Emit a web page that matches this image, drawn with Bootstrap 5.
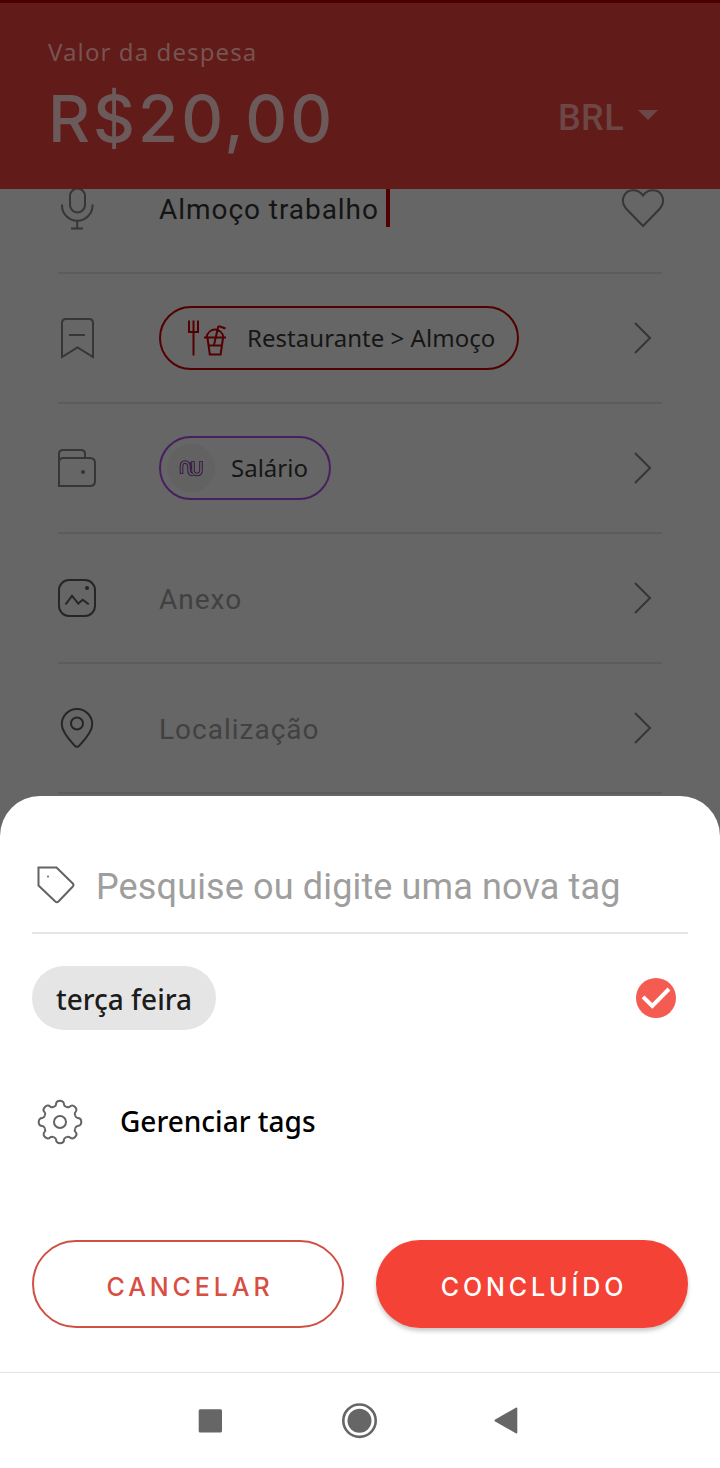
<!DOCTYPE html>
<html lang="pt-BR">
<head>
<meta charset="utf-8">
<meta name="viewport" content="width=device-width, initial-scale=1">
<title>Nova despesa</title>
<link href="https://cdn.jsdelivr.net/npm/bootstrap@5.3.0/dist/css/bootstrap.min.css" rel="stylesheet">
<style>
body{width:720px;height:1468px;overflow:hidden;background:#fff;font-family:"Noto Sans",sans-serif;line-height:1}
svg{display:block;fill:none;stroke:currentColor;stroke-width:2;flex:none}
.robo{font-family:Roboto,sans-serif}
.dot{fill:currentColor;stroke:none}
.amount-bar{height:189px;background:#611b18;border-top:3px solid #4d0002;padding:36px 62px 0 48px}
.caption-text{font-size:24px;letter-spacing:1.1px;line-height:26px;color:#775352}
.amount{font-family:Inter,"Noto Sans",sans-serif;font-size:65px;font-weight:500;letter-spacing:3px;line-height:80px;margin-top:14px;color:#6c5a5a}
.currency{font-size:36px;font-weight:500;letter-spacing:.4px;color:#6c4745;margin-top:7px}
.currency svg{margin-bottom:6px;margin-left:14px}
.backdrop-list{height:647px;background:#666;padding:0 58px;overflow:hidden;color:#363636}
.entry{height:130px;border-bottom:2px solid #5c5c5c}
.entry:first-child{margin-top:-45px}
.entry-icon{width:38px;margin-right:63px}
.entry-icon.strong{color:#262626}
.entry-text{font-size:28px;letter-spacing:1px;color:#414141;padding-top:3px}
.entry-text.typed{color:#141414;letter-spacing:.95px}
.pill{height:64px;border:2px solid #540000;border-radius:32px;font-size:24px;padding:0 22px;color:#161616}
.pill-category{letter-spacing:.04px}
.pill-account{border-color:#48205f;padding:0 21px 0 6px}
.food{color:#540000;margin-right:18px}
.bank{width:48px;height:48px;border-radius:50%;background:#626262;color:#371a45;margin-right:16px}
.caret-line{width:4px;height:38px;background:#540000;margin-left:7px}
.chev{margin-right:10px}
.heart{margin-right:-3px}
.sheet{height:576px;margin-top:-40px;border-radius:40px 40px 0 0;background:#fff;padding:56px 32px 0}
.search{height:82px;border-bottom:2px solid #e5e5e5;color:#636363;padding:0 0 15px 5px}
.search-text{font-size:36px;letter-spacing:.14px;color:#9e9e9e;margin-left:21px;padding-top:4px}
.tag-row{margin-top:32px;padding-right:12px}
.tag-pill{height:64px;border-radius:32px;background:#e5e5e5;font-size:28px;font-weight:500;color:#1c1c1c;padding:1px 24px 0}
.manage{font-size:28px;font-weight:500;color:#000;margin-top:68px;padding-left:4px;gap:36px}
.manage span{padding-bottom:3px}
.manage svg{color:#636363}
.actions{margin-top:94px;gap:32px}
.action{width:312px;height:88px;border-radius:44px;font-family:Inter,"Noto Sans",sans-serif;font-size:25px;font-weight:500;letter-spacing:3.900px;padding:7px 0 0 4px}
.action-cancel,.action-cancel:hover{border:2px solid #d05044;color:#d84e43}
.action-done,.action-done:hover{background:#f44336;border:0;color:#fff;box-shadow:0 3px 4px rgba(0,0,0,.22)}
.sysbar{height:96px;border-top:1px solid #e2e2e2;color:#666;padding-left:198px;gap:117px}
</style>
</head>
<body class="d-flex flex-column">
<header class="amount-bar d-flex justify-content-between flex-shrink-0">
  <div>
    <div class="caption-text">Valor da despesa</div>
    <div class="amount">R$20,00</div>
  </div>
  <div class="currency robo d-flex align-items-center align-self-center">BRL
    <svg width="20" height="10" viewBox="0 0 20 10"><path class="dot" d="M0 0h20L10 10z"/></svg>
  </div>
</header>
<main class="backdrop-list flex-shrink-0">
  <div class="entry d-flex align-items-center">
    <div class="entry-icon"><svg width="38" height="46" viewBox="0 0 38 46"><rect x="12" y="3.500" width="15" height="24" rx="7.500"/><path d="M4 19.500v1a15 15 0 0 0 30.500 0v-1M19.200 35.500v8M13 43.500h12"/></svg></div>
    <span class="entry-text typed robo">Almoço trabalho</span><span class="caret-line"></span>
    <svg class="ms-auto heart" width="44" height="40" viewBox="0 0 44 40"><path d="M22 38 5 20.500C-2 12 4 2.300 12 2.300c5 0 8.500 3 10 5.200 1.500-2.200 5-5.200 10-5.200 8 0 14 9.700 7 18.200Z"/></svg>
  </div>
  <div class="entry d-flex align-items-center">
    <div class="entry-icon"><svg width="38" height="42" viewBox="0 0 38 42"><path d="M4 40V6q0-4 4-4h23q4 0 4 4v34L19.500 30.500ZM11 18h16"/></svg></div>
    <div class="pill pill-category d-flex align-items-center">
      <svg class="food" width="46" height="40" viewBox="0 0 46 40"><path d="M6 2.500V14h9V2.500M10.500 2.500v35M21 19.500h22M23.500 19.500c1-5.500 5-8 8.500-8s7.500 2.500 8.500 8M24.500 20l2.300 16.500h10.800L40 20M26 27.500h13M31 27l4-17.500q.3-1.500 2-1l5.500 2"/></svg>
      <span>Restaurante &gt; Almoço</span>
    </div>
    <svg class="ms-auto chev" width="20" height="32" viewBox="0 0 20 32"><path d="m3 1 15 15L3 31"/></svg>
  </div>
  <div class="entry d-flex align-items-center">
    <div class="entry-icon"><svg width="38" height="40" viewBox="0 0 38 40"><path d="M1 39V6q0-4 4-4h18q4 0 4 4v3.500M1 14q0-4 4.500-4H32q5 0 5 5V33q0 5-5 5H1"/><circle class="dot" cx="25" cy="24" r="2"/></svg></div>
    <div class="pill pill-account d-flex align-items-center">
      <span class="bank d-flex align-items-center justify-content-center"><svg width="24" height="18" viewBox="0 0 24 18"><path stroke-width="3.600" d="M2.500 15V7.500q0-4.500 3.500-4.500t4 4.500V11q0 4.500 4 4.500M10 3.500 10.500 10M14 2v9q0 4.500 4 4.500t4-4.500V2"/><path stroke="#626262" stroke-width="1.600" d="M2.500 14.200V7.500q0-4.500 3.500-4.500t4 4.500V11q0 4.500 4 4.500M14 2.800V11q0 4.500 4 4.500t4-4.500V2.800"/></svg></span>
      <span>Salário</span>
    </div>
    <svg class="ms-auto chev" width="20" height="32" viewBox="0 0 20 32"><path d="m3 1 15 15L3 31"/></svg>
  </div>
  <div class="entry d-flex align-items-center">
    <div class="entry-icon strong"><svg width="38" height="38" viewBox="0 0 38 38"><rect x="1" y="1" width="36" height="36" rx="10"/><path d="M7.500 25.500 14 16.800l6.300 7.800 4.400-3.800 6 4.500"/><circle class="dot" cx="29" cy="9" r="2"/></svg></div>
    <span class="entry-text robo">Anexo</span>
    <svg class="ms-auto chev" width="20" height="32" viewBox="0 0 20 32"><path d="m3 1 15 15L3 31"/></svg>
  </div>
  <div class="entry d-flex align-items-center">
    <div class="entry-icon strong"><svg width="38" height="42" viewBox="0 0 38 42"><path d="M19 2A15.200 15.200 0 0 0 3.800 17.500C3.800 25 12 33.500 16.500 38.500q2.500 2.500 5 0C26 33.500 34.200 25 34.200 17.500A15.200 15.200 0 0 0 19 2Z"/><circle cx="19" cy="16.500" r="6"/></svg></div>
    <span class="entry-text robo">Localização</span>
    <svg class="ms-auto chev" width="20" height="32" viewBox="0 0 20 32"><path d="m3 1 15 15L3 31"/></svg>
  </div>
</main>
<section class="sheet flex-shrink-0">
  <div class="search d-flex align-items-center">
    <svg width="38" height="38" viewBox="0 0 38 38"><path d="M1.500 1.500h18l16.300 16q1.300 1.500 0 3L21.500 35.500q-1.600 1.400-3.200 0L1.500 19.500Z"/><circle class="dot" cx="11" cy="10.500" r="1"/></svg>
    <span class="search-text robo">Pesquise ou digite uma nova tag</span>
  </div>
  <div class="tag-row d-flex align-items-center justify-content-between">
    <div class="tag-pill d-flex align-items-center">terça feira</div>
    <svg width="40" height="40" viewBox="0 0 40 40"><circle cx="20" cy="20" r="20" fill="#f55c51" stroke="none"/><path d="m7 18.800 9.300 9.200L33 11" stroke="#fff" stroke-width="4"/></svg>
  </div>
  <div class="manage d-flex align-items-center">
    <svg width="48" height="48" viewBox="-24 -24 48 48">
      <defs><path id="tooth" d="M-6.300-15.200C-4.600-15.900-4-16.600-4-17.600-4-19.900-2.300-21.300 0-21.300S4-19.900 4-17.600c0 1 .6 1.700 2.300 2.400"/></defs>
      <use href="#tooth"/><use href="#tooth" transform="rotate(45)"/><use href="#tooth" transform="rotate(90)"/><use href="#tooth" transform="rotate(135)"/><use href="#tooth" transform="rotate(180)"/><use href="#tooth" transform="rotate(225)"/><use href="#tooth" transform="rotate(270)"/><use href="#tooth" transform="rotate(315)"/>
      <circle r="6"/>
    </svg>
    <span>Gerenciar tags</span>
  </div>
  <div class="actions d-flex">
    <button type="button" class="btn action action-cancel">CANCELAR</button>
    <button type="button" class="btn action action-done">CONCLUÍDO</button>
  </div>
</section>
<nav class="sysbar d-flex align-items-center flex-shrink-0">
  <svg width="24" height="24" viewBox="0 0 24 24"><rect class="dot" x=".7" y=".2" width="23.300" height="23.300" rx="1.500"/></svg>
  <svg width="38" height="36" viewBox="0 0 38 36"><circle cx="20.500" cy="17.700" r="16.200" stroke-width="2.600"/><circle class="dot" cx="20.500" cy="17.700" r="12"/></svg>
  <svg width="24" height="27" viewBox="0 0 24 27"><path class="dot" d="M1.200 12.400 21.800.7q1.500-.7 1.500 1v23.600q0 1.700-1.500 1L1.200 14.400q-1.500-1 0-2Z"/></svg>
</nav>
<script src="https://cdn.jsdelivr.net/npm/bootstrap@5.3.0/dist/js/bootstrap.bundle.min.js"></script>
</body>
</html>
